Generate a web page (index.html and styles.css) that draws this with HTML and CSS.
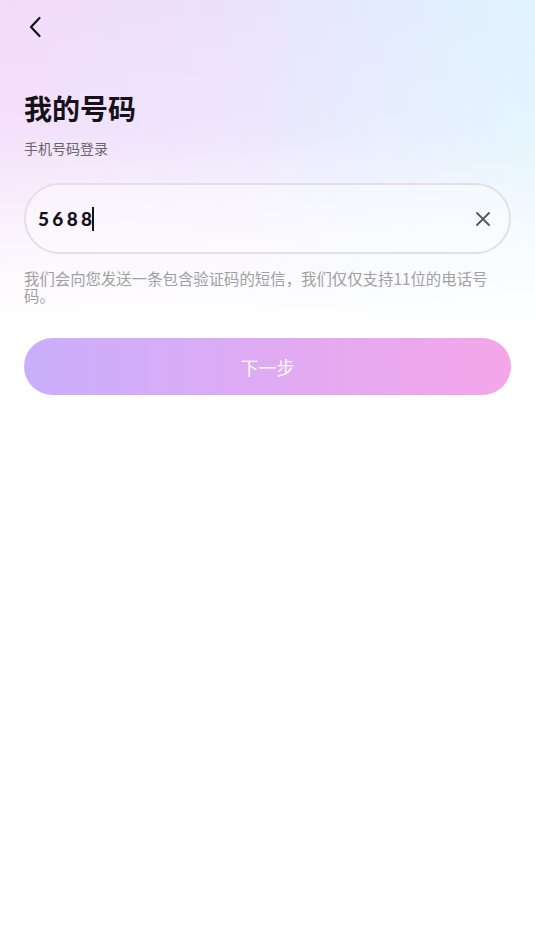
FILE: index.html
```html
<!DOCTYPE html>
<html lang="zh">
<head>
<meta charset="utf-8">
<title>我的号码</title>
<link rel="stylesheet" href="styles.css">
</head>
<body>
<div class="page">
  <div class="bg"></div>
  <div class="content">
    <div class="nav">
      <svg class="back" width="16" height="24" viewBox="0 0 16 24"><path d="M12.5 3 L4 12 L12.5 21" fill="none" stroke="#111" stroke-width="2.2" stroke-linecap="round" stroke-linejoin="round"/></svg>
    </div>
    <h1 class="title">我的号码</h1>
    <p class="subtitle">手机号码登录</p>
    <div class="field">
      <span class="value">5688</span><span class="caret"></span>
      <svg class="clear" width="16" height="16" viewBox="0 0 16 16"><path d="M2 2 L14 14 M14 2 L2 14" stroke="#555" stroke-width="1.8" stroke-linecap="round"/></svg>
    </div>
    <p class="hint">我们会向您发送一条包含验证码的短信，我们仅仅支持11位的电话号码。</p>
    <button class="next">下一步</button>
  </div>
</div>
</body>
</html>
```
FILE: styles.css
```css
html, body {
  margin: 0;
  padding: 0;
  background: #fff;
}
body {
  font-family: "Noto Sans CJK SC", "Noto Sans", sans-serif;
}
.page {
  position: relative;
  width: 535px;
  min-height: 951px;
  overflow: hidden;
}
.bg {
  position: absolute;
  left: 0;
  top: 0;
  width: 100%;
  height: 330px;
  background:
    linear-gradient(to bottom, rgba(255,255,255,0) 0%, rgba(255,255,255,0.15) 40%, rgba(255,255,255,0.75) 75%, #fff 100%),
    linear-gradient(to right, #f3dbfa 0%, #ebe2fc 45%, #e4ebfe 70%, #e0f3fd 100%);
}
.content {
  position: relative;
  padding: 0 24px;
  display: flex;
  flex-direction: column;
}
.nav {
  height: 54px;
  display: flex;
  align-items: center;
}
.back {
  margin-left: 3px;
  margin-top: -1px;
}
.title {
  margin: 36px 0 0;
  font-size: 28px;
  line-height: 36px;
  font-weight: 700;
  color: #16121a;
}
.subtitle {
  margin: 12px 0 0;
  font-size: 14px;
  line-height: 20px;
  color: #666;
}
.field {
  box-sizing: border-box;
  margin-top: 25px;
  height: 71px;
  border: 2px solid #e2e0e4;
  border-radius: 36px;
  background: rgba(255,255,255,0.35);
  display: flex;
  align-items: center;
  padding: 0 18px 0 12px;
}
.value {
  font-family: "Lato", "Inter", sans-serif;
  font-weight: 900;
  font-size: 19px;
  letter-spacing: 3.3px;
  color: #16121a;
}
.caret {
  width: 2px;
  height: 24px;
  background: #16121a;
  margin-left: -3px;
}
.clear {
  margin-left: auto;
}
.hint {
  margin: 16px 0 0;
  font-size: 15.4px;
  line-height: 16.5px;
  color: #a0a0a0;
}
.next {
  margin-top: 35px;
  height: 57px;
  border: none;
  border-radius: 29px;
  background: linear-gradient(to right, #c9affd, #f5a6e9);
  color: #fff;
  font-family: "Noto Sans CJK SC", sans-serif;
  font-size: 18px;
  padding: 0;
}
```
